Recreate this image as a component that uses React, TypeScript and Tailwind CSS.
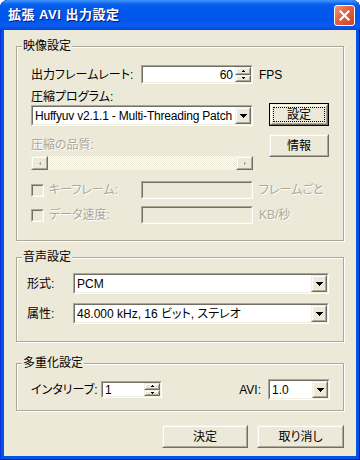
import React from "react";

type P = { className?: string; inner?: string; children?: React.ReactNode };

const Sunken = ({ className = "", inner = "bg-white", children }: P) => (
  <div className={`flex border border-t-[#aca899] border-l-[#aca899] border-b-white border-r-white ${className}`}>
    <div className={`flex min-w-0 flex-1 items-stretch border border-t-[#716f64] border-l-[#716f64] border-b-[#f1efe2] border-r-[#f1efe2] ${inner}`}>
      {children}
    </div>
  </div>
);

const Raised = ({ className = "", children }: P) => (
  <div className={`flex border border-t-[#f1efe2] border-l-[#f1efe2] border-b-[#716f64] border-r-[#716f64] ${className}`}>
    <div className="flex flex-1 items-center justify-center border border-t-white border-l-white border-b-[#aca899] border-r-[#aca899] bg-[#ece9d8]">
      {children}
    </div>
  </div>
);

const DownArrow = ({ color = "#000" }: { color?: string }) => (
  <svg width="7" height="4" viewBox="0 0 7 4" shapeRendering="crispEdges">
    <path d="M0 0h7v1H0zM1 1h5v1H1zM2 2h3v1H2zM3 3h1v1H3z" fill={color} />
  </svg>
);

const TinyUp = () => (
  <svg width="3" height="2" viewBox="0 0 3 2" shapeRendering="crispEdges">
    <path d="M1 0h1v1H1zM0 1h3v1H0z" fill="#000" />
  </svg>
);
const TinyDown = () => (
  <svg width="3" height="2" viewBox="0 0 3 2" shapeRendering="crispEdges">
    <path d="M0 0h3v1H0zM1 1h1v1H1z" fill="#000" />
  </svg>
);

const Spin = () => (
  <div className="flex w-[16px] flex-col">
    <Raised className="flex-1">
      <TinyUp />
    </Raised>
    <Raised className="flex-1">
      <TinyDown />
    </Raised>
  </div>
);

const Select = ({ className = "", text, textClass = "" }: { className?: string; text: string; textClass?: string }) => (
  <Sunken className={`h-[21px] ${className}`}>
    <div className={`flex min-w-0 flex-1 items-center overflow-hidden whitespace-nowrap pl-[2px] ${textClass}`}>{text}</div>
    <Raised className="w-[16px]">
      <DownArrow />
    </Raised>
  </Sunken>
);

const dis = "text-[#aca899] [text-shadow:1px_1px_0_#ffffff]";

const Group = ({ title, className = "", children }: { title: string; className?: string; children: React.ReactNode }) => (
  <div className={`relative w-[328px] border border-[#aca899] shadow-[inset_1px_1px_0_#ffffff,1px_1px_0_#ffffff] ${className}`}>
    <span className="absolute -top-[8px] left-[5px] bg-[#ece9d8] px-[1px] leading-[14px]">{title}</span>
    {children}
  </div>
);

const Check = () => <Sunken className="h-[13px] w-[13px]" inner="bg-[#ece9d8]" />;

const Button = ({ className = "", children }: P) => (
  <Raised className={`h-[23px] ${className}`}>{children}</Raised>
);

export default function App() {
  return (
    <div className="flex h-[460px] w-[360px] flex-col rounded-t-[8px] bg-[#0055e5] font-['Liberation_Sans','Noto_Sans_CJK_JP',sans-serif] text-[12px] leading-[14px] text-black [font-feature-settings:'palt'] shadow-[inset_1px_0_0_#0831d9,inset_-1px_0_0_#001ea0,inset_0_-1px_0_#001ea0]">
      {/* Title bar */}
      <div className="flex h-[30px] items-center rounded-t-[8px] bg-[linear-gradient(180deg,#3d95ff_0px,#2a7ff8_2px,#0a62ec_4px,#0058ee_9px,#0054e9_20px,#0a5df0_25px,#0049dc_30px)] pl-[8px] pr-[5px]">
        <span className="flex-1 text-[13px] font-bold tracking-[0.5px] text-white [text-shadow:1px_1px_0_#0a1883]">
          拡張 AVI 出力設定
        </span>
        <div className="flex h-[21px] w-[21px] items-center justify-center rounded-[3px] border border-white bg-[linear-gradient(135deg,#f09878_0%,#e3603d_45%,#cc4322_100%)]">
          <svg width="11" height="11" viewBox="0 0 11 11">
            <path d="M1.5 1.5L9.5 9.5M9.5 1.5L1.5 9.5" stroke="#fff" strokeWidth="2.2" strokeLinecap="square" />
          </svg>
        </div>
      </div>

      {/* Body */}
      <div className="mx-[4px] mb-[4px] flex flex-1 flex-col bg-[#ece9d8] px-[12px]">
        {/* 映像設定 */}
        <Group title="映像設定" className="mt-[16px] pb-[16px] pl-[14px] pt-[18px]">
          <div className="flex h-[19px] items-center">
            <span className="w-[110px]">出力フレームレート:</span>
            <Sunken className="h-[19px] w-[112px]">
              <div className="flex flex-1 items-center justify-end pr-[2px]">60</div>
              <Spin />
            </Sunken>
            <span className="ml-[6px]">FPS</span>
          </div>

          <div className="mt-[5px] flex">
            <div className="flex w-[222px] flex-col">
              <div className="flex h-[16px] items-center">圧縮プログラム:</div>
              <Select className="w-[222px]" textClass="tracking-[-0.2px]" text="Huffyuv v2.1.1 - Multi-Threading Patch" />
              <div className={`mt-[11px] flex h-[16px] items-center ${dis}`}>圧縮の品質:</div>
              <div className="mt-[3px] flex h-[14px]">
                <Raised className="w-[17px]">
                  <svg width="2" height="3" viewBox="0 0 2 3" shapeRendering="crispEdges">
                    <path d="M1 0h1v3H1zM0 1h1v1H0z" fill="#aca899" />
                  </svg>
                </Raised>
                <div className="flex-1 bg-[image:repeating-conic-gradient(#ffffff_0_25%,#ece9d8_0_50%)] bg-[length:2px_2px]" />
                <Raised className="w-[17px]">
                  <svg width="2" height="3" viewBox="0 0 2 3" shapeRendering="crispEdges">
                    <path d="M0 0h1v3H0zM1 1h1v1H1z" fill="#aca899" />
                  </svg>
                </Raised>
              </div>
            </div>
            <div className="ml-[16px] flex w-[60px] flex-col pt-[14px]">
              <div className="flex h-[23px] border border-black">
                <Raised className="flex-1">
                  <div className="m-[1px] flex flex-1 items-center justify-center self-stretch border border-dotted border-black">
                    設定
                  </div>
                </Raised>
              </div>
              <Button className="mt-[8px] w-[60px]">情報</Button>
            </div>
          </div>

          <div className="mt-[11px] flex h-[18px] items-center">
            <div className="flex w-[110px] items-center">
              <Check />
              <span className={`ml-[5px] ${dis}`}>キーフレーム:</span>
            </div>
            <Sunken className="h-[18px] w-[112px]" inner="bg-[#ece9d8]" />
            <span className={`ml-[6px] ${dis}`}>フレームごと</span>
          </div>
          <div className="mt-[7px] flex h-[18px] items-center">
            <div className="flex w-[110px] items-center">
              <Check />
              <span className={`ml-[5px] ${dis}`}>データ速度:</span>
            </div>
            <Sunken className="h-[18px] w-[112px]" inner="bg-[#ece9d8]" />
            <span className={`ml-[6px] ${dis}`}>KB/秒</span>
          </div>
        </Group>

        {/* 音声設定 */}
        <Group title="音声設定" className="mt-[16px] pb-[17px] pl-[10px] pt-[15px]">
          <div className="flex items-center">
            <span className="w-[46px]">形式:</span>
            <Select className="w-[256px]" text="PCM" />
          </div>
          <div className="mt-[9px] flex items-center">
            <span className="w-[46px]">属性:</span>
            <Select className="w-[256px]" text="48.000 kHz, 16 ビット, ステレオ" />
          </div>
        </Group>

        {/* 多重化設定 */}
        <Group title="多重化設定" className="mt-[21px] pb-[10px] pl-[14px] pr-[13px] pt-[15px]">
          <div className="flex h-[21px] items-center">
            <span className="w-[70px]">インタリーブ:</span>
            <Sunken className="h-[17px] w-[61px]">
              <div className="flex flex-1 items-center pl-[2px]">1</div>
              <Spin />
            </Sunken>
            <span className="ml-auto mr-[7px]">AVI:</span>
            <Select className="w-[62px]" text="1.0" />
          </div>
        </Group>

        {/* Buttons */}
        <div className="mt-[14px] flex justify-end gap-[9px]">
          <Button className="w-[86px]">決定</Button>
          <Button className="w-[87px]">取り消し</Button>
        </div>
      </div>
    </div>
  );
}
